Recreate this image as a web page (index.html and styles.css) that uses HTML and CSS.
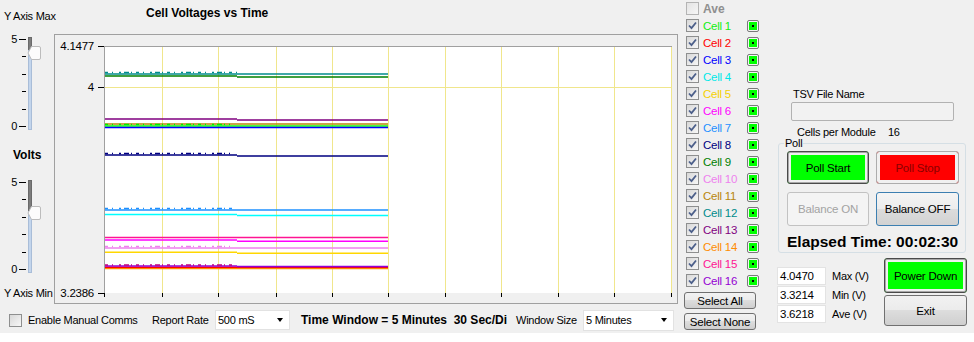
FILE: index.html
```html
<!DOCTYPE html>
<html lang="en">
<head>
  <meta charset="UTF-8">
  <title>Cell Voltages vs Time</title>
  <link rel="stylesheet" href="styles.css">
</head>
<body>
<div class="app">
  <div class="main">
    <div class="upper">
      <!-- y axis sliders -->
      <div class="axis-col">
        <div class="axis-title">Y Axis Max</div>
        <svg class="slider" width="54" height="106" viewBox="0 0 54 106">
          <g stroke="#000">
            <path d="M19 9.5H26 M22 26.5H26 M22 44.5H26 M22 61.5H26 M22 79.5H26 M19 96.5H26"/>
          </g>
          <text x="17" y="13">5</text>
          <text x="17" y="100">0</text>
          <rect x="28.5" y="7.5" width="3" height="92" fill="#c3d5ec" stroke="#a9bdd8"/>
          <rect x="28.5" y="7.5" width="3" height="12" fill="#7c7c7c" stroke="#6a6a6a"/>
          <path d="M28 23 L31.5 16.5 H39 Q40.5 16.5 40.5 18 V28 Q40.5 29.5 39 29.5 H31.5 Z" fill="#fcfcfc" stroke="#bcbcbc"/>
        </svg>
        <div class="volts">Volts</div>
        <svg class="slider" width="54" height="109" viewBox="0 0 54 109">
          <g stroke="#000">
            <path d="M19 10.5H26 M22 27.5H26 M22 45.5H26 M22 62.5H26 M22 80.5H26 M19 97.5H26"/>
          </g>
          <text x="17" y="14">5</text>
          <text x="17" y="101">0</text>
          <rect x="28.5" y="8.5" width="3" height="92" fill="#c3d5ec" stroke="#a9bdd8"/>
          <rect x="28.5" y="8.5" width="3" height="30" fill="#7c7c7c" stroke="#6a6a6a"/>
          <path d="M28 41 L31.5 34.5 H39 Q40.5 34.5 40.5 36 V46 Q40.5 47.5 39 47.5 H31.5 Z" fill="#fcfcfc" stroke="#bcbcbc"/>
        </svg>
        <div class="ymin">Y Axis Min</div>
      </div>

      <!-- chart -->
      <div class="chart-col">
        <div class="chart-title">Cell Voltages vs Time</div>
        <div class="chart-box">
          <svg class="chart" width="622" height="268" viewBox="55 35 622 268">
            <rect x="104" y="46" width="568" height="247" fill="#fff"/>
            <path stroke="#f0e68c" d="M162.5 47V293 M218.5 47V293 M276.5 47V293 M332.5 47V293 M388.5 47V293 M445.5 47V293 M501.5 47V293 M558.5 47V293 M614.5 47V293 M671.5 47V293 M105 87.5H672"/>
            <path stroke="#a0a0a0" d="M104.5 46V293 M104 46.5H672"/>
            <path stroke="#000" d="M98 46.5H104 M98 87.5H104 M98 293.5H104 M104.5 293V297 M162.5 293V297 M218.5 293V297 M276.5 293V297 M332.5 293V297 M388.5 293V297 M445.5 293V297 M501.5 293V297 M558.5 293V297 M614.5 293V297 M671.5 293V297"/>
            <text x="94" y="50" text-anchor="end">4.1477</text>
            <text x="94" y="91" text-anchor="end">4</text>
            <text x="94" y="297" text-anchor="end">3.2386</text>

            <g fill="none" stroke-width="1.5">
              <path stroke="#008b8b" d="M105 74H388"/>
              <path stroke="#008b8b" class="jit" d="M105 72.6H237"/>
              <path stroke="#008000" d="M105 76H237 M237 77H388"/>
              <path stroke="#800080" d="M105 119H237 M237 120H388"/>
              <path stroke="#b8860b" d="M105 124H388"/>
              <path stroke="#00ff00" d="M105 126H388"/>
              <path stroke="#00ee00" class="jit" d="M105 124.6H230"/>
              <path stroke="#0000ff" d="M105 127.4H388"/>
              <path stroke="#000080" d="M105 155H237 M237 156H388"/>
              <path stroke="#000080" class="jit" d="M105 153.6H230"/>
              <path stroke="#1e90ff" d="M105 210H388"/>
              <path stroke="#1e90ff" class="jit" d="M105 208.6H233"/>
              <path stroke="#00ffff" d="M105 214.5H237 M237 215.5H388"/>
              <path stroke="#ff1493" d="M105 237.5H388"/>
              <path stroke="#ff00ff" d="M105 240H237 M237 241.3H388"/>
              <path stroke="#ee82ee" d="M105 248H388"/>
              <path stroke="#ee82ee" class="jit" d="M105 246.6H230"/>
              <path stroke="#ffd700" d="M105 252.3H237 M237 253.3H388"/>
              <path stroke="#ff8c00" d="M105 268.6H388"/>
              <path stroke="#ff0000" d="M105 267.2H388"/>
              <path stroke="#9400d3" d="M105 266H237 M237 266.4H388"/>
              <path stroke="#c00080" class="jit" d="M105 265H233"/>
            </g>
          </svg>
        </div>
      </div>
    </div>

    <div class="bottom-bar">
      <span class="chk"></span>
      <span class="manual-label">Enable Manual Comms</span>
      <span class="rate-label">Report Rate</span>
      <div class="combo rate-combo"><span>500 mS</span><i class="arrow"></i></div>
      <span class="window-text">Time Window = 5 Minutes  30 Sec/Di</span>
      <span class="ws-label">Window Size</span>
      <div class="combo ws-combo"><span>5 Minutes</span><i class="arrow"></i></div>
    </div>
  </div>

  <!-- cell selection list -->
  <div class="cells">
    <div class="cell-row"><span class="chk off"></span><span class="cell-name ave">Ave</span></div>
    <div class="cell-row"><span class="chk on"><svg viewBox="0 0 11 11"><path d="M2 5.5l2.5 2.6 4.5-5.6"/></svg></span><span class="cell-name" style="color:#11ee11">Cell 1</span><span class="led"><i></i></span></div>
    <div class="cell-row"><span class="chk on"><svg viewBox="0 0 11 11"><path d="M2 5.5l2.5 2.6 4.5-5.6"/></svg></span><span class="cell-name" style="color:#ff0000">Cell 2</span><span class="led"><i></i></span></div>
    <div class="cell-row"><span class="chk on"><svg viewBox="0 0 11 11"><path d="M2 5.5l2.5 2.6 4.5-5.6"/></svg></span><span class="cell-name" style="color:#0000ff">Cell 3</span><span class="led"><i></i></span></div>
    <div class="cell-row"><span class="chk on"><svg viewBox="0 0 11 11"><path d="M2 5.5l2.5 2.6 4.5-5.6"/></svg></span><span class="cell-name" style="color:#00e8e8">Cell 4</span><span class="led"><i></i></span></div>
    <div class="cell-row"><span class="chk on"><svg viewBox="0 0 11 11"><path d="M2 5.5l2.5 2.6 4.5-5.6"/></svg></span><span class="cell-name" style="color:#f5d000">Cell 5</span><span class="led"><i></i></span></div>
    <div class="cell-row"><span class="chk on"><svg viewBox="0 0 11 11"><path d="M2 5.5l2.5 2.6 4.5-5.6"/></svg></span><span class="cell-name" style="color:#ff00ff">Cell 6</span><span class="led"><i></i></span></div>
    <div class="cell-row"><span class="chk on"><svg viewBox="0 0 11 11"><path d="M2 5.5l2.5 2.6 4.5-5.6"/></svg></span><span class="cell-name" style="color:#1e90ff">Cell 7</span><span class="led"><i></i></span></div>
    <div class="cell-row"><span class="chk on"><svg viewBox="0 0 11 11"><path d="M2 5.5l2.5 2.6 4.5-5.6"/></svg></span><span class="cell-name" style="color:#000080">Cell 8</span><span class="led"><i></i></span></div>
    <div class="cell-row"><span class="chk on"><svg viewBox="0 0 11 11"><path d="M2 5.5l2.5 2.6 4.5-5.6"/></svg></span><span class="cell-name" style="color:#008000">Cell 9</span><span class="led"><i></i></span></div>
    <div class="cell-row"><span class="chk on"><svg viewBox="0 0 11 11"><path d="M2 5.5l2.5 2.6 4.5-5.6"/></svg></span><span class="cell-name" style="color:#ee82ee">Cell 10</span><span class="led"><i></i></span></div>
    <div class="cell-row"><span class="chk on"><svg viewBox="0 0 11 11"><path d="M2 5.5l2.5 2.6 4.5-5.6"/></svg></span><span class="cell-name" style="color:#b8860b">Cell 11</span><span class="led"><i></i></span></div>
    <div class="cell-row"><span class="chk on"><svg viewBox="0 0 11 11"><path d="M2 5.5l2.5 2.6 4.5-5.6"/></svg></span><span class="cell-name" style="color:#008b8b">Cell 12</span><span class="led"><i></i></span></div>
    <div class="cell-row"><span class="chk on"><svg viewBox="0 0 11 11"><path d="M2 5.5l2.5 2.6 4.5-5.6"/></svg></span><span class="cell-name" style="color:#800080">Cell 13</span><span class="led"><i></i></span></div>
    <div class="cell-row"><span class="chk on"><svg viewBox="0 0 11 11"><path d="M2 5.5l2.5 2.6 4.5-5.6"/></svg></span><span class="cell-name" style="color:#ff8c00">Cell 14</span><span class="led"><i></i></span></div>
    <div class="cell-row"><span class="chk on"><svg viewBox="0 0 11 11"><path d="M2 5.5l2.5 2.6 4.5-5.6"/></svg></span><span class="cell-name" style="color:#ff1493">Cell 15</span><span class="led"><i></i></span></div>
    <div class="cell-row"><span class="chk on"><svg viewBox="0 0 11 11"><path d="M2 5.5l2.5 2.6 4.5-5.6"/></svg></span><span class="cell-name" style="color:#9400d3">Cell 16</span><span class="led"><i></i></span></div>
    <button class="btn select-btn first">Select All</button>
    <button class="btn select-btn">Select None</button>
  </div>

  <!-- controls -->
  <div class="panel">
    <div class="tsv-label">TSV File Name</div>
    <div class="tsv-box"></div>
    <div class="cells-per"><span class="cpm-label">Cells per Module</span><span>16</span></div>
    <div class="group">
      <div class="group-label">Poll</div>
      <div class="btn-grid">
        <button class="btn btn-go focus">Poll Start</button>
        <button class="btn btn-stop">Poll Stop</button>
        <button class="btn btn-off">Balance ON</button>
        <button class="btn btn-hot">Balance OFF</button>
      </div>
      <div class="elapsed">Elapsed Time: 00:02:30</div>
    </div>
    <div class="lower">
      <div class="readings">
        <div class="rd-row"><span class="rd-box">4.0470</span><span>Max (V)</span></div>
        <div class="rd-row"><span class="rd-box">3.3214</span><span>Min (V)</span></div>
        <div class="rd-row"><span class="rd-box">3.6218</span><span>Ave (V)</span></div>
      </div>
      <div class="side-btns">
        <button class="btn btn-go focus power">Power Down</button>
        <button class="btn exit">Exit</button>
      </div>
    </div>
  </div>
</div>
</body>
</html>
```
FILE: styles.css
```css
body {
    margin: 0;
    background: #fff;
    font-family: "Liberation Sans", Arial, sans-serif;
    font-size: 11px;
    letter-spacing: -0.25px;
    color: #000;
}

.app {
    display: flex;
    width: 974px;
    height: 333px;
    background: #f0f0f0;
    overflow: hidden;
}

.main {
    width: 680px;
    display: flex;
    flex-direction: column;
}

.upper {
    display: flex;
    height: 304px;
}

/* sliders on the left */
.axis-col {
    width: 54px;
    display: flex;
    flex-direction: column;
}

.axis-title {
    height: 30px;
    box-sizing: border-box;
    padding: 9px 0 0 4px;
    line-height: 14px;
    white-space: nowrap;
}

.slider {
    display: block;
}

.slider text {
    font-size: 11px;
    text-anchor: end;
}

.volts {
    height: 36px;
    box-sizing: border-box;
    padding: 12px 0 0 13px;
    font-weight: bold;
    font-size: 12px;
    line-height: 14px;
    letter-spacing: 0;
}

.ymin {
    height: 23px;
    box-sizing: border-box;
    padding: 5px 0 0 4px;
    line-height: 14px;
    white-space: nowrap;
}

/* chart */
.chart-col {
    width: 626px;
    display: flex;
    flex-direction: column;
}

.chart-title {
    height: 34px;
    box-sizing: border-box;
    padding: 6px 0 0 92px;
    font-weight: bold;
    font-size: 12px;
    line-height: 14px;
    letter-spacing: 0;
}

.chart-box {
    width: 624px;
    height: 270px;
    box-sizing: border-box;
    border: 1px solid #a0a0a0;
}

.chart {
    display: block;
}

.chart text {
    font-size: 11.5px;
}

.jit {
    stroke-dasharray: 3 4 1 6 2 3 5 2 1 4;
}

/* bottom bar */
.bottom-bar {
    height: 29px;
    box-sizing: border-box;
    padding: 3px 0 0 9px;
    display: flex;
    align-items: center;
    white-space: nowrap;
}

.manual-label {
    width: 124px;
    margin-left: 6px;
}

.rate-label {
    width: 63px;
}

.combo {
    box-sizing: border-box;
    display: flex;
    align-items: center;
    justify-content: space-between;
    padding: 0 6px 0 2px;
    background: #fff;
    border: 1px solid #e2e2e2;
}

.rate-combo {
    width: 75px;
    height: 20px;
}

.ws-combo {
    width: 91px;
    height: 21px;
}

.arrow {
    width: 0;
    height: 0;
    border-top: 4px solid #000;
    border-left: 3.5px solid transparent;
    border-right: 3.5px solid transparent;
}

.window-text {
    width: 211px;
    margin-left: 11px;
    white-space: pre;
    font-weight: bold;
    font-size: 12px;
    letter-spacing: 0;
}

.ws-label {
    width: 67px;
    margin-left: 4px;
}

/* checkboxes */
.chk {
    width: 13px;
    height: 13px;
    flex: none;
    box-sizing: border-box;
    border: 1px solid #8e8f8f;
    background: linear-gradient(135deg, #d8d8d8, #f7f7f7);
}

.chk.off {
    border-color: #b4b4b4;
    background: linear-gradient(135deg, #e4e4e4, #f6f6f6);
}

.chk svg {
    display: block;
    width: 11px;
    height: 11px;
}

.chk path {
    fill: none;
    stroke: #4c5f8a;
    stroke-width: 1.8;
}

/* cell list */
.cells {
    width: 76px;
    margin-left: 4px;
    display: flex;
    flex-direction: column;
}

.cell-row {
    height: 17px;
    display: flex;
    align-items: center;
    padding-left: 2px;
}

.cell-name {
    width: 44px;
    margin-left: 4px;
    font-size: 11.5px;
    white-space: nowrap;
}

.cell-name.ave {
    color: #8f8f8f;
    font-weight: bold;
    font-size: 12px;
    letter-spacing: 0;
}

.led {
    width: 12px;
    height: 12px;
    box-sizing: border-box;
    border: 1px solid #7a7a7a;
    border-radius: 2px;
    padding: 1px;
    background: #f4f4f4;
}

.led i {
    display: flex;
    align-items: center;
    justify-content: center;
    width: 100%;
    height: 100%;
    background: #00ff00;
}

.led i::after {
    content: "";
    width: 2px;
    height: 2px;
    background: #000;
}

/* buttons */
.btn {
    box-sizing: border-box;
    padding: 0;
    font-family: inherit;
    font-size: 11px;
    letter-spacing: -0.2px;
    color: #000;
    border: 1px solid #707070;
    border-radius: 3px;
    background: linear-gradient(#f2f2f2 0%, #ebebeb 50%, #dddddd 50%, #cfcfcf 100%);
}

.select-btn {
    width: 72px;
    height: 17px;
    margin-top: 4px;
    font-size: 11.5px;
}

.select-btn.first {
    margin-top: 3px;
}

.btn-go {
    background: #00ff00;
    box-shadow: inset 0 0 0 1px #a8a8a8, inset 0 0 0 3px #f0f0f0;
}

.btn.focus {
    border-color: #4a4a4a;
}

.btn-stop {
    background: #ff0000;
    color: #8a0000;
    border-color: #acacac;
    box-shadow: inset 0 0 0 3px #f0f0f0;
}

.btn-off {
    background: #f4f4f4;
    border-color: #c2c2c2;
    color: #a3a3a3;
}

.btn-hot {
    border-color: #3c7fb1;
    background: linear-gradient(#f4f4f4 0%, #ececec 50%, #dcdcdc 50%, #d2d2d2 100%);
}

/* right panel */
.panel {
    width: 204px;
    margin-left: 10px;
    display: flex;
    flex-direction: column;
}

.tsv-label {
    margin-top: 87px;
    padding-left: 23px;
    line-height: 14px;
}

.tsv-box {
    width: 163px;
    height: 19px;
    margin: 1px 0 0 21px;
    box-sizing: border-box;
    border: 1px solid #b2b2b2;
    border-radius: 2px;
    background: #f2f2f2;
}

.cells-per {
    margin-top: 4px;
    padding-left: 27px;
    line-height: 14px;
    display: flex;
}

.cpm-label {
    width: 91px;
}

.group {
    width: 188px;
    height: 110px;
    margin: 4px 0 0 8px;
    box-sizing: border-box;
    padding-left: 8px;
    border: 1px solid #d5dfe5;
    border-radius: 3px;
}

.group-label {
    width: fit-content;
    margin: -8px 0 0 -3px;
    padding: 0 1px;
    line-height: 14px;
    background: #f0f0f0;
}

.btn-grid {
    display: grid;
    grid-template-columns: 82px 83px;
    grid-template-rows: 33px 34px;
    column-gap: 7px;
    row-gap: 8px;
    margin-top: 1px;
}

.btn-grid .btn {
    font-size: 11.5px;
}

.elapsed {
    margin-top: 7px;
    font-weight: bold;
    font-size: 15.5px;
    line-height: 18px;
    letter-spacing: 0;
    white-space: nowrap;
}

.lower {
    display: flex;
    margin: 5px 0 0 7px;
}

.readings {
    width: 107px;
    padding-top: 9px;
}

.rd-row {
    display: flex;
    align-items: center;
    height: 18px;
    margin-bottom: 1px;
}

.rd-box {
    width: 49px;
    height: 18px;
    margin-right: 6px;
    box-sizing: border-box;
    padding-left: 2px;
    line-height: 16px;
    border: 1px solid #e3e3e3;
    background: #fff;
    font-size: 11.5px;
}

.side-btns {
    display: flex;
    flex-direction: column;
    gap: 2px;
}

.power {
    width: 83px;
    height: 35px;
    font-size: 11.5px;
}

.exit {
    width: 83px;
    height: 31px;
    font-size: 11.5px;
}
```
